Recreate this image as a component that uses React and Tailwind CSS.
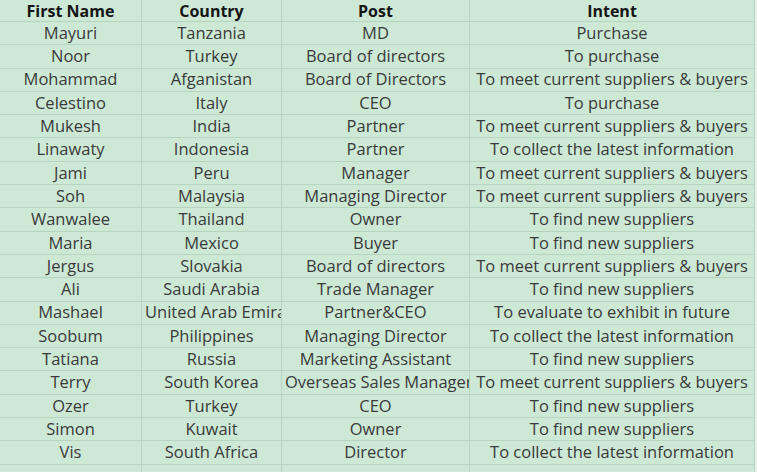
const rows = [
  ['Mayuri', 'Tanzania', 'MD', 'Purchase'],
  ['Noor', 'Turkey', 'Board of directors', 'To purchase'],
  ['Mohammad', 'Afganistan', 'Board of Directors', 'To meet current suppliers & buyers'],
  ['Celestino', 'Italy', 'CEO', 'To purchase'],
  ['Mukesh', 'India', 'Partner', 'To meet current suppliers & buyers'],
  ['Linawaty', 'Indonesia', 'Partner', 'To collect the latest information'],
  ['Jami', 'Peru', 'Manager', 'To meet current suppliers & buyers'],
  ['Soh', 'Malaysia', 'Managing Director', 'To meet current suppliers & buyers'],
  ['Wanwalee', 'Thailand', 'Owner', 'To find new suppliers'],
  ['Maria', 'Mexico', 'Buyer', 'To find new suppliers'],
  ['Jergus', 'Slovakia', 'Board of directors', 'To meet current suppliers & buyers'],
  ['Ali', 'Saudi Arabia', 'Trade Manager', 'To find new suppliers'],
  ['Mashael', 'United Arab Emirates', 'Partner&CEO', 'To evaluate to exhibit in future'],
  ['Soobum', 'Philippines', 'Managing Director', 'To collect the latest information'],
  ['Tatiana', 'Russia', 'Marketing Assistant', 'To find new suppliers'],
  ['Terry', 'South Korea', 'Overseas Sales Manager', 'To meet current suppliers & buyers'],
  ['Ozer', 'Turkey', 'CEO', 'To find new suppliers'],
  ['Simon', 'Kuwait', 'Owner', 'To find new suppliers'],
  ['Vis', 'South Africa', 'Director', 'To collect the latest information'],
  ['', '', '', ''],
];

const cols = ['w-[142px]', 'w-[140px]', 'w-[188px]', 'w-[284px]'];

// cells whose text is wider than the column get clipped from the left edge, like the sheet does
const clipped = ['United Arab Emirates', 'Overseas Sales Manager'];

function Cell({ w, children, head, last }) {
  const clip = clipped.includes(children);
  return (
    <div
      className={`${w} shrink-0 h-full whitespace-nowrap flex items-center ${clip ? 'justify-start pl-[3px] overflow-x-clip' : 'justify-center'} ${last ? '' : 'border-r border-[#b6d4bf]'} ${head ? 'font-bold text-[16px] text-[#151515]' : 'text-[#3a3a3a]'}`}
    >
      {children}
    </div>
  );
}

export default function App() {
  return (
    <div className="w-[757px] h-[472px] overflow-hidden bg-[#e4f2e8] font-['Open_Sans','Liberation_Sans',sans-serif] text-[16.5px]">
      <div className="w-[755px] bg-[#cde9d6] border-r border-[#b6d4bf]">
        <div className="flex h-[22px] border-b border-[#b6d4bf] leading-none">
          {['First Name', 'Country', 'Post', 'Intent'].map((h, i) => (
            <Cell key={h} w={cols[i]} head last={i === 3}>{h}</Cell>
          ))}
        </div>
        {rows.map((r, k) => (
          <div key={k} className="flex h-[23.3px] border-b border-[#b6d4bf] leading-none">
            {r.map((c, i) => (
              <Cell key={i} w={cols[i]} last={i === 3}>{c}</Cell>
            ))}
          </div>
        ))}
      </div>
    </div>
  );
}
